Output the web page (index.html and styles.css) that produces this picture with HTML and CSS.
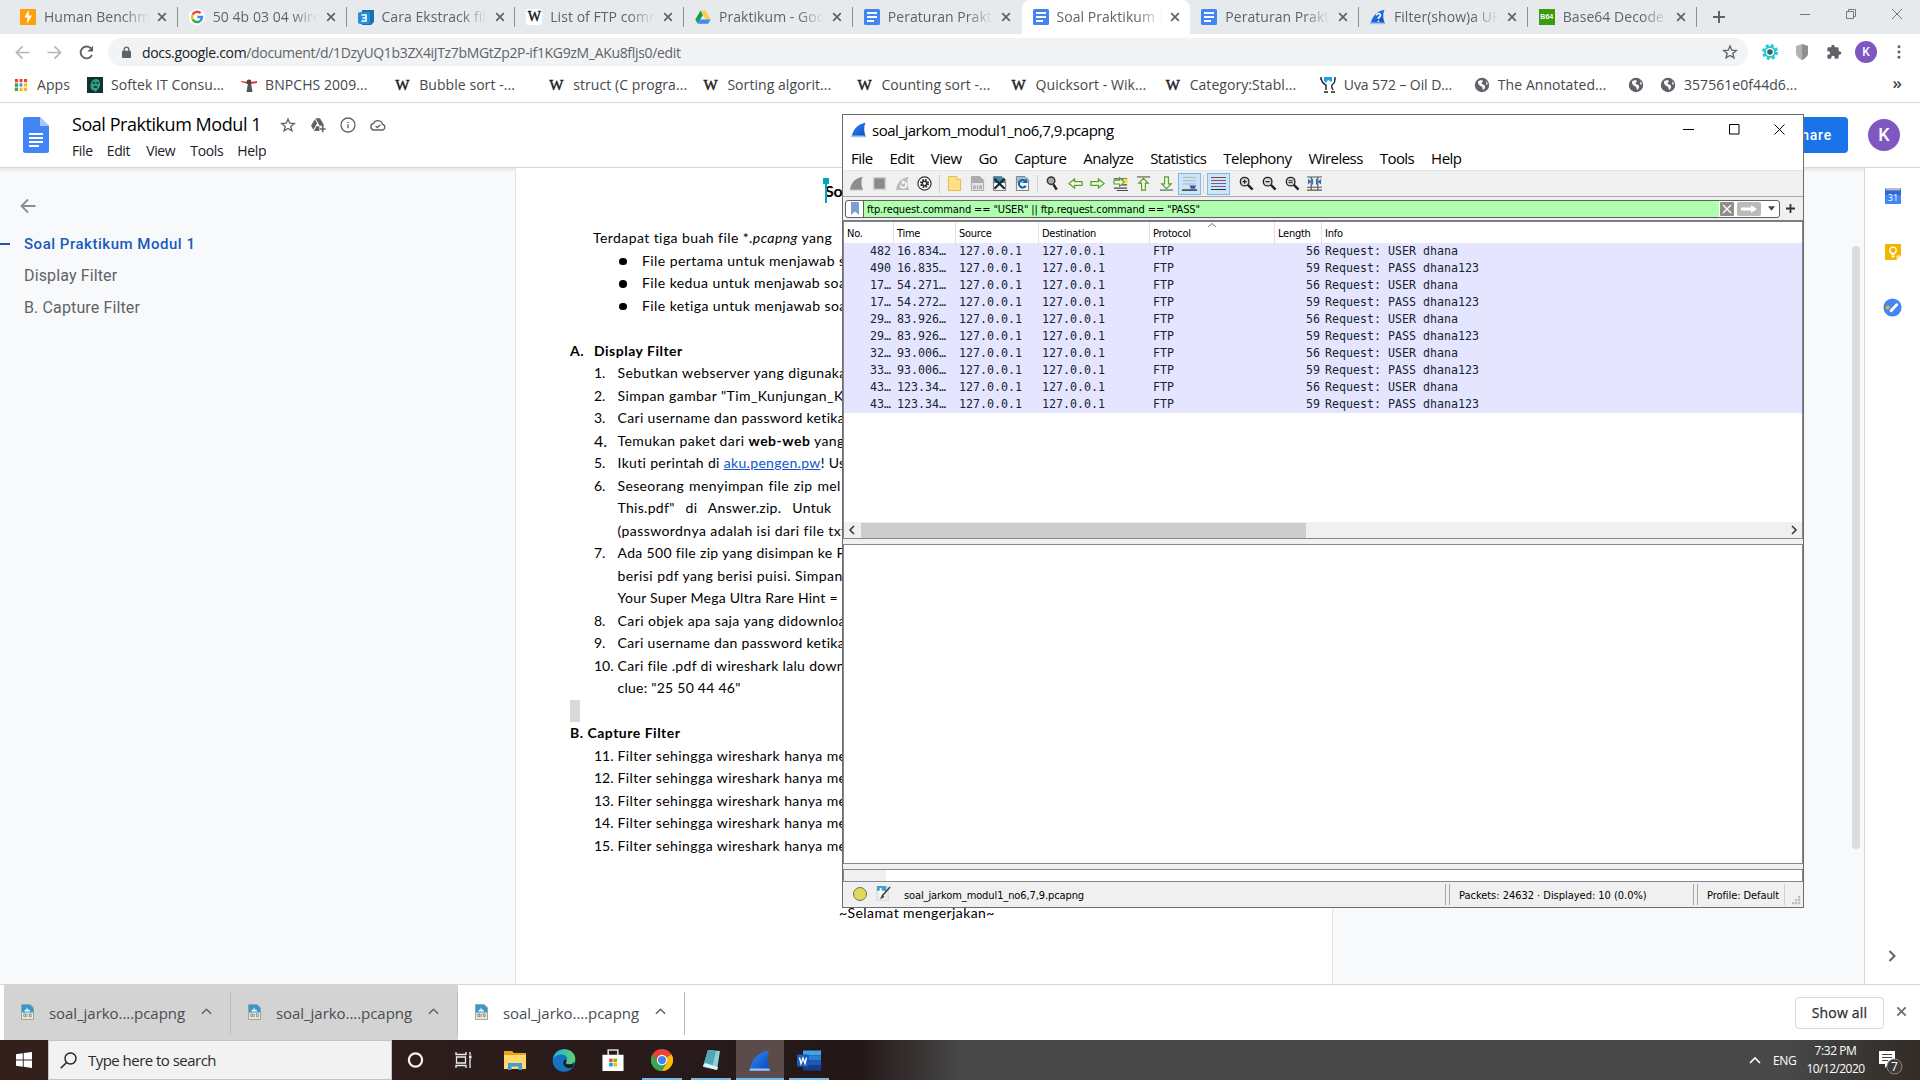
FILE: index.html
```html
<!DOCTYPE html>
<html lang="id">
<head>
<meta charset="utf-8">
<title>Soal Praktikum Modul 1 - Google Docs</title>
<link rel="stylesheet" href="styles.css">
</head>
<body>
<svg class="defs" aria-hidden="true">
  <defs>
    <linearGradient id="finBlue" x1="0" y1="0" x2="1" y2="1"><stop offset="0" stop-color="#2f8bff"/><stop offset="1" stop-color="#0a48b8"/></linearGradient>
    <symbol id="fin" viewBox="0 0 16 16"><path d="M.5 15C2 8 6 2 14.500.8 12.600 5 12.800 10 15 15z" fill="url(#finBlue)"/><path d="M.5 15.200l.7-1.700h13.200l.6 1.700z" fill="#9cc4f5"/></symbol>
    <symbol id="gdoc" viewBox="0 0 16 16"><rect width="16" height="16" rx="1.5" fill="#4285f4"/><path d="M3 4h10M3 8h10M3 12h7" stroke="#fff" stroke-width="1.8"/></symbol>
    <symbol id="x" viewBox="0 0 10 10"><path d="M1.2 1.2l7.6 7.6M8.8 1.2L1.2 8.8" stroke="currentColor" stroke-width="1.7" fill="none"/></symbol>
    <symbol id="globe" viewBox="0 0 16 16"><circle cx="8" cy="8" r="7.200" fill="#5f6368"/><path d="M4 4.500C6 2.500 9 3 9 4S7 5.500 7.500 6.500 10 7 11 9c.6 1.500-.6 3-2 4-.5-1 0-2-1-3S3.500 8 4 4.500zM12 4l2 3-1.500 1z" fill="#fff"/></symbol>
    <symbol id="star" viewBox="0 0 24 24"><path d="M12 3l2.600 6.300 6.900.5-5.300 4.400 1.700 6.700L12 17.300l-5.900 3.600 1.700-6.700L2.500 9.800l6.900-.5z" fill="none" stroke="#5f6368" stroke-width="2"/></symbol>
    <symbol id="back" viewBox="0 0 16 16"><path d="M15.500 8H2M8 1.500L1.500 8 8 14.500" fill="none" stroke="currentColor" stroke-width="1.800"/></symbol>
    <symbol id="up" viewBox="0 0 12 8"><path d="M1 7l5-5 5 5" fill="none" stroke="currentColor" stroke-width="1.600"/></symbol>
    <symbol id="capfile" viewBox="0 0 14 17"><path d="M.5.500h9.500l3.500 3.500v12.500H.5z" fill="#eceada" stroke="#9a9a8c"/><path d="M1 1h9l3 3v5H1z" fill="#2f9ad0"/><path d="M4 8V6h2V4h1v2h2l1 2z" fill="#fff"/><path d="M3 10.500h2v3H3zM6.500 10.500v3.500M9 10.500h2v3H9z" fill="none" stroke="#888"/></symbol>
    <symbol id="lens" viewBox="0 0 16 16"><circle cx="6" cy="6" r="4.600" fill="#d8d8d8" stroke="#222" stroke-width="1.400"/><path d="M9.500 9.500l5 5" stroke="#222" stroke-width="2.600"/></symbol>
    <symbol id="garrow" viewBox="0 0 16 12"><path d="M1 6l6-4.800v2.800h8v4H7v2.800z" fill="#f4ffe8" stroke="#5a9e2a" stroke-width="1.300"/></symbol>
  </defs>
</svg>

<div class="browser">
  <div class="tabstrip">
    <div class="tab"><svg class="fav" viewBox="0 0 16 16"><rect width="16" height="16" rx="1" fill="#ff9f0a"/><path d="M8.500 1L4.500 8.500h3L7 15l5-8.500H8.800z" fill="#fff"/></svg><span class="tab-t">Human Benchm</span><svg class="cl"><use href="#x"/></svg></div>
    <div class="tab"><svg class="fav" viewBox="0 0 16 16"><circle cx="8" cy="8" r="8" fill="#fff"/><g fill="none" stroke-width="2.400"><path d="M11.600 4.200A5 5 0 0 0 3.600 5.800" stroke="#ea4335"/><path d="M3.600 5.800a5 5 0 0 0 0 4.600" stroke="#fbbc05"/><path d="M3.600 10.400a5 5 0 0 0 7.700 1.400" stroke="#34a853"/><path d="M11.300 11.800A5 5 0 0 0 13 8H8.300" stroke="#4285f4"/></g></svg><span class="tab-t">50 4b 03 04 wire</span><svg class="cl"><use href="#x"/></svg></div>
    <div class="tab"><svg class="fav" viewBox="0 0 16 16"><path d="M4 1h12v12l-3 3H4z" fill="#1a6fb0"/><rect y="3" width="12" height="12" rx="2" fill="#2b8fd8"/><path d="M3.500 6H8v6H3.500M4.500 9H8" fill="none" stroke="#fff" stroke-width="1.500"/></svg><span class="tab-t">Cara Ekstrack file</span><svg class="cl"><use href="#x"/></svg></div>
    <div class="tab"><span class="fav wiki">W</span><span class="tab-t">List of FTP comr</span><svg class="cl"><use href="#x"/></svg></div>
    <div class="tab"><svg class="fav" viewBox="0 0 16 16"><path d="M5.500 1.500L.3 10.500l2.600 4.200L8 5.800z" fill="#0f9d58"/><path d="M5.500 1.500h5l5.200 9h-5.200z" fill="#ffcd40"/><path d="M5.400 10.500h10.300l-2.600 4.200H2.900z" fill="#4285f4"/></svg><span class="tab-t">Praktikum - Goo</span><svg class="cl"><use href="#x"/></svg></div>
    <div class="tab nosep"><svg class="fav"><use href="#gdoc"/></svg><span class="tab-t">Peraturan Prakti</span><svg class="cl"><use href="#x"/></svg></div>
    <div class="tab active"><svg class="fav"><use href="#gdoc"/></svg><span class="tab-t">Soal Praktikum M</span><svg class="cl"><use href="#x"/></svg></div>
    <div class="tab"><svg class="fav"><use href="#gdoc"/></svg><span class="tab-t">Peraturan Prakti</span><svg class="cl"><use href="#x"/></svg></div>
    <div class="tab"><svg class="fav"><use href="#fin"/><path d="M6.500 6.500q0-2 2-2t2 1.700-2 2.300v1.500M8.500 11.500v1.600" fill="none" stroke="#fff" stroke-width="1.600"/></svg><span class="tab-t">Filter(show)a UF</span><svg class="cl"><use href="#x"/></svg></div>
    <div class="tab"><span class="fav b64">B64</span><span class="tab-t">Base64 Decode</span><svg class="cl"><use href="#x"/></svg></div>
    <svg class="newtab" viewBox="0 0 12 12"><path d="M6 0v12M0 6h12" stroke="#5f6368" stroke-width="2"/></svg>
    <div class="wc">
      <svg viewBox="0 0 12 12"><path d="M1 6.500h10" stroke="#777"/></svg>
      <svg viewBox="0 0 12 12"><path d="M1.500 3.500h7v7h-7zM3.500 3.500v-2h7v7h-2" stroke="#777" fill="none"/></svg>
      <svg viewBox="0 0 12 12"><path d="M1 1l10 10M11 1L1 11" stroke="#777"/></svg>
    </div>
  </div>

  <div class="toolbar">
    <svg class="nav dim"><use href="#back"/></svg>
    <svg class="nav dim flip"><use href="#back"/></svg>
    <svg class="nav" viewBox="0 0 16 16"><path d="M13.800 10.500A6.300 6.300 0 1 1 12.500 3.500" fill="none" stroke="#5f6368" stroke-width="2"/><path d="M15 .8v6H9z" fill="#5f6368"/></svg>
    <div class="omni">
      <svg class="lock" viewBox="0 0 10 14"><rect y="5" width="10" height="8" rx="1" fill="#5f6368"/><path d="M2.500 6V3.500a2.500 2.500 0 0 1 5 0V6" fill="none" stroke="#5f6368" stroke-width="1.500"/></svg>
      <span class="url"><b>docs.google.com</b>/document/d/1DzyUQ1b3ZX4iJTz7bMGtZp2P-if1KG9zM_AKu8fljs0/edit</span>
      <svg class="omni-star"><use href="#star"/></svg>
    </div>
    <div class="exts">
      <svg viewBox="0 0 16 16"><circle cx="8" cy="8" r="6.500" fill="none" stroke="#2cc6d0" stroke-width="3" stroke-dasharray="3 2.100"/><circle cx="8" cy="8" r="5" fill="none" stroke="#2cc6d0" stroke-width="2"/><circle cx="8" cy="8" r="2.800" fill="#36616e"/></svg>
      <svg viewBox="0 0 16 16"><path d="M8 0l6 2v7c0 3-3 5.500-6 7-3-1.500-6-4-6-7V2z" fill="#b3b3b3"/><path d="M8 0l6 2v7c0 3-3 5.500-6 7z" fill="#8f8f8f"/></svg>
      <svg viewBox="0 0 24 24"><path d="M20.500 11H19V7a2 2 0 0 0-2-2h-4V3.500a2.500 2.500 0 0 0-5 0V5H4a2 2 0 0 0-2 2v3.800h1.500a2.700 2.700 0 0 1 0 5.400H2V20a2 2 0 0 0 2 2h3.800v-1.500a2.700 2.700 0 0 1 5.400 0V22H17a2 2 0 0 0 2-2v-4h1.500a2.500 2.500 0 0 0 0-5z" fill="#5f6368"/></svg>
    </div>
    <span class="me small">K</span>
    <svg class="dots" viewBox="0 0 4 16"><g fill="#5f6368"><circle cx="2" cy="2" r="1.700"/><circle cx="2" cy="8" r="1.700"/><circle cx="2" cy="14" r="1.700"/></g></svg>
  </div>

  <div class="bookmarks">
    <span class="bm apps"><svg viewBox="0 0 16 16"><path d="M1 3h4M1 8h4M1 13h4" stroke="#ea4335" stroke-width="3.600"/><path d="M6 3h4M11 3h4" stroke="#ea4335" stroke-width="3.600"/><path d="M1 8h4" stroke="#34a853" stroke-width="3.600"/><path d="M1 13h4" stroke="#34a853" stroke-width="3.600"/><path d="M6 8h4" stroke="#4285f4" stroke-width="3.600"/><path d="M11 8h4M6 13h4M11 13h4" stroke="#fbbc05" stroke-width="3.600"/><path d="M5.500 0v16M10.500 0v16" stroke="#fff" stroke-width="1.400"/></svg>Apps</span>
    <span class="bm"><svg viewBox="0 0 16 16"><rect width="16" height="16" fill="#12312f"/><path d="M4 12C2 4 8 0 12 3c2 3 1 8-1 9l-2 3z" fill="#2f9c85"/><path d="M6 6h2M9.500 6h2M7 10h3" stroke="#0b1f1e" stroke-width="1.500"/></svg>Softek IT Consu...</span>
    <span class="bm"><svg viewBox="0 0 16 16"><path d="M5.500 15l1.500-9h3l1.500 9z" fill="#555"/><path d="M0 4l7 1v2L0 5zM16 4L9 5v2l7-1z" fill="#d33"/><circle cx="8" cy="5" r="2.400" fill="#444"/></svg>BNPCHS 2009...</span>
    <span class="bm"><i class="w">W</i>Bubble sort -...</span>
    <span class="bm"><i class="w">W</i>struct (C progra...</span>
    <span class="bm"><i class="w">W</i>Sorting algorit...</span>
    <span class="bm"><i class="w">W</i>Counting sort -...</span>
    <span class="bm"><i class="w">W</i>Quicksort - Wik...</span>
    <span class="bm"><i class="w">W</i>Category:Stabl...</span>
    <span class="bm uva"><svg viewBox="0 0 16 16"><path d="M4 0h8v5l-4-2-2 3-2-2z" fill="#17a4e8"/><path d="M1 1c1 5 2 5 5 7v5M15 1c-1 5 1 4-3 7-1 2 0 3 1 5M4 15h4M11 15h4M1 0v3M15 0v3" fill="none" stroke="#222" stroke-width="1.400"/></svg>Uva 572 – Oil D...</span>
    <span class="bm"><svg><use href="#globe"/></svg>The Annotated...</span>
    <span class="bm bare"><svg><use href="#globe"/></svg></span>
    <span class="bm"><svg><use href="#globe"/></svg>357561e0f44d6...</span>
    <span class="more">»</span>
  </div>

  <header class="docs-head">
    <svg class="doc-logo" viewBox="0 0 26 36"><path d="M2.500 0H17l9 9v24.500a2.500 2.500 0 0 1-2.500 2.500h-21A2.500 2.500 0 0 1 0 33.500v-31A2.500 2.500 0 0 1 2.500 0z" fill="#4285f4"/><path d="M17 0l9 9h-9z" fill="#a9c7fb"/><path d="M6 17h14M6 21h14M6 25h14M6 29h10" stroke="#fff" stroke-width="2"/></svg>
    <div class="doc-meta">
      <div class="doc-title"><span>Soal Praktikum Modul 1</span>
        <svg><use href="#star"/></svg>
        <svg viewBox="0 0 24 24"><path d="M8 2h7l6.500 11h-7z" fill="#5f6368"/><path d="M7.200 3.300l3.400 6L5 19l-3.500-6z" fill="#5f6368"/><path d="M9.500 14H14v7H6z" fill="#5f6368"/><path d="M19 13v10M14.500 18h9" stroke="#5f6368" stroke-width="2.400"/></svg>
        <svg viewBox="0 0 24 24"><circle cx="12" cy="12" r="10.500" fill="none" stroke="#5f6368" stroke-width="2"/><path d="M12 11v6M12 7v2" stroke="#5f6368" stroke-width="2"/></svg>
        <svg viewBox="0 0 24 24"><path d="M6 19.500a5 5 0 0 1-.6-9.900A7 7 0 0 1 18.700 11 4.300 4.300 0 0 1 18.500 19.500z" fill="none" stroke="#5f6368" stroke-width="2"/><path d="M8.500 13.500l2.500 2.500 4.500-4.500" fill="none" stroke="#5f6368" stroke-width="2"/></svg>
      </div>
      <nav class="doc-menu"><span>File</span><span>Edit</span><span>View</span><span>Tools</span><span>Help</span></nav>
    </div>
    <span class="share">Share</span>
    <span class="me">K</span>
  </header>

  <main class="docs-body">
    <aside class="outline">
      <svg><use href="#back"/></svg>
      <p class="cur">Soal Praktikum Modul 1</p>
      <p>Display Filter</p>
      <p>B. Capture Filter</p>
    </aside>
    <article class="page">
      <h1><span class="caret"></span>Soal Shift</h1>
      <p class="in1">Terdapat tiga buah file *.<em>pcapng</em> yang</p>
      <p class="bul"><i></i>File pertama untuk menjawab soal</p>
      <p class="bul"><i></i>File kedua untuk menjawab soal</p>
      <p class="bul"><i></i>File ketiga untuk menjawab soal</p>
      <p>&nbsp;</p>
      <p class="sec"><span>A.</span>Display Filter</p>
      <p class="num"><span>1.</span>Sebutkan webserver yang digunakan</p>
      <p class="num"><span>2.</span>Simpan gambar "Tim_Kunjungan_Kerja</p>
      <p class="num snug"><span>3.</span>Cari username dan password ketika</p>
      <p class="num"><span class="four">4.</span>Temukan paket dari&nbsp;<b>web-web</b>&nbsp;yang</p>
      <p class="num snug"><span>5.</span>Ikuti perintah di&nbsp;<a>aku.pengen.pw</a>! Username</p>
      <p class="num j1"><span>6.</span>Seseorang menyimpan file zip mel</p>
      <p class="cont j2">This.pdf" di Answer.zip. Untuk m</p>
      <p class="cont">(passwordnya adalah isi dari file txt</p>
      <p class="num snug"><span>7.</span>Ada 500 file zip yang disimpan ke FTP</p>
      <p class="cont">berisi pdf yang berisi puisi. Simpan</p>
      <p class="cont tight">Your Super Mega Ultra Rare Hint =</p>
      <p class="num"><span>8.</span>Cari objek apa saja yang didownload</p>
      <p class="num snug"><span>9.</span>Cari username dan password ketika</p>
      <p class="num snug"><span>10.</span>Cari file .pdf di wireshark lalu download</p>
      <p class="cont tight">clue: "25 50 44 46"</p>
      <p class="sel"><i></i></p>
      <p class="secb">B. Capture Filter</p>
      <p class="num"><span>11.</span>Filter sehingga wireshark hanya me</p>
      <p class="num"><span>12.</span>Filter sehingga wireshark hanya me</p>
      <p class="num"><span>13.</span>Filter sehingga wireshark hanya me</p>
      <p class="num"><span>14.</span>Filter sehingga wireshark hanya me</p>
      <p class="num"><span>15.</span>Filter sehingga wireshark hanya me</p>
      <p>&nbsp;</p><p>&nbsp;</p>
      <p class="bye">~Selamat mengerjakan~</p>
    </article>
    <div class="scroll"><i></i></div>
    <aside class="side">
      <svg viewBox="0 0 16 16"><rect width="16" height="16" rx="1" fill="#4285f4"/><path d="M1 0h14v2.500H1z" fill="#bdbdbd"/><path d="M0 2.500h16V7H0z" fill="#3367d6"/><text x="8" y="13" class="cal">31</text></svg>
      <svg viewBox="0 0 16 16"><path d="M1 0h14a1 1 0 0 1 1 1v10.500L11.500 16H1a1 1 0 0 1-1-1V1a1 1 0 0 1 1-1z" fill="#f4b400"/><path d="M16 11.500L11.500 16v-4.500z" fill="#fde6a3"/><circle cx="8" cy="6.300" r="3.200" fill="none" stroke="#fff" stroke-width="1.300"/><path d="M6.500 10.500h3M6.500 12.500h3" stroke="#fff" stroke-width="1.300"/></svg>
      <svg class="big" viewBox="0 0 20 20"><circle cx="10" cy="10" r="9.500" fill="#4285f4"/><path d="M8.500 13.500l6-6.500" stroke="#fff" stroke-width="3" stroke-linecap="round"/><circle cx="5" cy="10" r="2" fill="#f4b400"/></svg>
      <svg class="chev" viewBox="0 0 8 12"><path d="M1.500 1l5 5-5 5" fill="none" stroke="#5f6368" stroke-width="2"/></svg>
    </aside>
  </main>

  <footer class="downloads">
    <div class="dl grey"><svg class="f"><use href="#capfile"/></svg><span>soal_jarko....pcapng</span><svg class="u"><use href="#up"/></svg></div>
    <div class="dl grey"><svg class="f"><use href="#capfile"/></svg><span>soal_jarko....pcapng</span><svg class="u"><use href="#up"/></svg></div>
    <div class="dl"><svg class="f"><use href="#capfile"/></svg><span>soal_jarko....pcapng</span><svg class="u"><use href="#up"/></svg></div>
    <span class="showall">Show all</span>
    <svg class="dlx"><use href="#x"/></svg>
  </footer>
</div>

<section class="shark">
  <div class="ws-title">
    <svg class="ws-ico"><use href="#fin"/></svg><span>soal_jarkom_modul1_no6,7,9.pcapng</span>
    <div class="ws-wc">
      <svg viewBox="0 0 11 11"><path d="M0 5.500h11" stroke="#000"/></svg>
      <svg viewBox="0 0 11 11"><path d="M.5.500h9.500v9.500H.5z" fill="none" stroke="#000"/></svg>
      <svg viewBox="0 0 11 11"><path d="M.5.500l10 10M10.500.500l-10 10" stroke="#000"/></svg>
    </div>
  </div>
  <nav class="ws-menu"><span>File</span><span>Edit</span><span>View</span><span>Go</span><span>Capture</span><span>Analyze</span><span>Statistics</span><span>Telephony</span><span>Wireless</span><span>Tools</span><span>Help</span></nav>
  <div class="ws-tools">
    <span><svg viewBox="0 0 16 16"><path d="M1 15C2 8 6 2 14.500.8 12.600 5 12.800 10 15 15z" fill="#8e8e8e"/><path d="M1 15h14" stroke="#ccc"/></svg></span>
    <span><svg viewBox="0 0 16 16"><rect x="1" y="1" width="14" height="14" fill="#d0d0d0"/><rect x="2.500" y="2.500" width="11" height="11" fill="#8a8a8a"/></svg></span>
    <span><svg viewBox="0 0 16 16"><path d="M1 15C2 8 6 2 14.500.8 12.600 5 12.800 10 15 15z" fill="#bdbdbd"/><path d="M6 9.500a3 3 0 1 0 3-3M7.500 5l2 1.500-2 2" stroke="#fff" stroke-width="1.500" fill="none"/></svg></span>
    <span><svg viewBox="0 0 16 16"><circle cx="8" cy="8" r="7" fill="#fff" stroke="#333" stroke-width="1.300"/><circle cx="8" cy="8" r="3.800" fill="none" stroke="#333" stroke-width="2" stroke-dasharray="1.800 1.200"/><circle cx="8" cy="8" r="3.200" fill="#333"/><circle cx="8" cy="8" r="1.500" fill="#fff"/></svg></span>
    <b></b>
    <span><svg viewBox="0 0 14 16"><path d="M.5.500h9v3h4v12H.5z" fill="#ffe084" stroke="#e0b74c"/></svg></span>
    <span><svg viewBox="0 0 14 16"><path d="M.5.500h9l4 4v11H.5z" fill="#e4e4e4" stroke="#a5a5a5"/><path d="M1 1h8.500L13 4.500v3H1z" fill="#adadad"/><path d="M3 10.500h1.500v3H3zM7 10v4M9.500 10.500H11v3H9.500z" stroke="#999" fill="none"/></svg></span>
    <span><svg viewBox="0 0 14 16"><path d="M.5.500h9l4 4v11H.5z" fill="#eef3f5" stroke="#777"/><path d="M1 1h8.500L13 4.500v3H1z" fill="#3789b5"/><path d="M1.500 3l11 10.500M12.500 3l-11 10.500" stroke="#1b2226" stroke-width="2.200"/></svg></span>
    <span><svg viewBox="0 0 14 16"><path d="M.5.500h9l4 4v11H.5z" fill="#eef3f5" stroke="#777"/><path d="M1 1h8.500L13 4.500v3H1z" fill="#8fc1dc"/><path d="M10.500 10.500A4 4 0 1 1 9.500 5" fill="none" stroke="#1b5fa0" stroke-width="2.200"/><path d="M12 2.500v5H7z" fill="#1b5fa0"/></svg></span>
    <b></b>
    <span><svg viewBox="0 0 14 16"><circle cx="5.500" cy="5" r="4" fill="#aaa" stroke="#333" stroke-width="1.500"/><path d="M8 9l3.500 5.500" stroke="#222" stroke-width="2.600"/></svg></span>
    <span><svg><use href="#garrow"/></svg></span>
    <span><svg class="flip"><use href="#garrow"/></svg></span>
    <span><svg viewBox="0 0 16 16"><path d="M1 3h14M1 13h14M4 15.500h12M9 9.500h6" stroke="#444" stroke-width="1.300"/><rect x="11" y="3" width="5" height="5" fill="#ffe14d"/><path d="M1 4.500h6V2l5 4.500-5 4.500V8.500H1z" fill="#e9fbd8" stroke="#5a9e2a" stroke-width="1.200"/></svg></span>
    <span><svg viewBox="0 0 16 16"><path d="M1 1h14" stroke="#666" stroke-width="1.300"/><path d="M8 2.500l5 5H10v7.500H6V7.500H3z" fill="#f4ffe8" stroke="#5a9e2a" stroke-width="1.300"/></svg></span>
    <span><svg viewBox="0 0 16 16"><path d="M1 15h14" stroke="#666" stroke-width="1.300"/><path d="M8 13.500l5-5H10V1H6v7.500H3z" fill="#f4ffe8" stroke="#5a9e2a" stroke-width="1.300"/></svg></span>
    <span class="on"><svg viewBox="0 0 16 16"><path d="M1 1.500h14M1 5h14M1 8.500h14" stroke="#aab4b4" /><path d="M0 15h16" stroke="#222" stroke-width="1.400"/><path d="M8 10h7l-1.500 3.500h-4z" fill="#2c5fa8"/></svg></span>
    <b></b>
    <span class="on"><svg viewBox="0 0 15 15"><path d="M0 1.500h15" stroke="#555"/><path d="M0 4.500h15" stroke="#e03030"/><path d="M0 7.500h15" stroke="#3a6fd8"/><path d="M0 10.500h15" stroke="#7a5a8a"/><path d="M0 13.500h15" stroke="#333"/></svg></span>
    <b class="none"></b>
    <span><svg viewBox="0 0 16 16"><use href="#lens"/><path d="M3.800 6h4.400M6 3.800v4.400" stroke="#222" stroke-width="1.200"/></svg></span>
    <span><svg viewBox="0 0 16 16"><use href="#lens"/><path d="M3.800 6h4.400" stroke="#222" stroke-width="1.300"/></svg></span>
    <span><svg viewBox="0 0 16 16"><use href="#lens"/><path d="M3.800 5h4.400M3.800 7h4.400" stroke="#222"/></svg></span>
    <span><svg viewBox="0 0 16 16"><path d="M0 1h16M0 15h16M0 12h16M4.500 1v14M11.500 1v14" stroke="#555" stroke-width="1.200"/><path d="M1 3l3.500 3L1 9zM15 3l-3.500 3L15 9z" fill="#2c6fb8"/><path d="M5 3h1.500v6H5zM9.500 3H11v6H9.500z" fill="#2c6fb8"/></svg></span>
  </div>
  <div class="ws-filter">
    <div class="box">
      <div class="mark"><svg viewBox="0 0 8 13"><path d="M0 0h8v13L4 9.500 0 13z" fill="#7a9fd0"/></svg></div>
      <span class="expr">ftp.request.command == "USER" || ftp.request.command == "PASS"</span>
      <svg class="clr" viewBox="0 0 14 14"><rect width="14" height="14" rx="1" fill="#8f8f8a"/><path d="M3 3l8 8M11 3l-8 8" stroke="#fff" stroke-width="1.400"/></svg>
      <svg class="go" viewBox="0 0 24 14"><rect width="24" height="14" rx="2" fill="#bababa"/><path d="M4 5.500h10V3l6 4-6 4V8.500H4z" fill="#fff"/></svg>
      <svg class="tri" viewBox="0 0 6 4"><path d="M0 0h6L3 4z" fill="#444"/></svg>
    </div>
    <svg class="plus" viewBox="0 0 8 8"><path d="M4 0v8M0 4h8" stroke="#333" stroke-width="1.600"/></svg>
  </div>
  <div class="ws-list">
    <div class="row head"><span>No.</span><span>Time</span><span>Source</span><span>Destination</span><span>Protocol<svg class="sort" viewBox="0 0 8 4"><path d="M0 4l4-3.500L8 4" fill="none" stroke="#777"/></svg></span><span>Length</span><span>Info</span></div>
    <div class="row"><span>482</span><span>16.834…</span><span>127.0.0.1</span><span>127.0.0.1</span><span>FTP</span><span>56</span><span>Request: USER dhana</span></div>
    <div class="row"><span>490</span><span>16.835…</span><span>127.0.0.1</span><span>127.0.0.1</span><span>FTP</span><span>59</span><span>Request: PASS dhana123</span></div>
    <div class="row"><span>17…</span><span>54.271…</span><span>127.0.0.1</span><span>127.0.0.1</span><span>FTP</span><span>56</span><span>Request: USER dhana</span></div>
    <div class="row"><span>17…</span><span>54.272…</span><span>127.0.0.1</span><span>127.0.0.1</span><span>FTP</span><span>59</span><span>Request: PASS dhana123</span></div>
    <div class="row"><span>29…</span><span>83.926…</span><span>127.0.0.1</span><span>127.0.0.1</span><span>FTP</span><span>56</span><span>Request: USER dhana</span></div>
    <div class="row"><span>29…</span><span>83.926…</span><span>127.0.0.1</span><span>127.0.0.1</span><span>FTP</span><span>59</span><span>Request: PASS dhana123</span></div>
    <div class="row"><span>32…</span><span>93.006…</span><span>127.0.0.1</span><span>127.0.0.1</span><span>FTP</span><span>56</span><span>Request: USER dhana</span></div>
    <div class="row"><span>33…</span><span>93.006…</span><span>127.0.0.1</span><span>127.0.0.1</span><span>FTP</span><span>59</span><span>Request: PASS dhana123</span></div>
    <div class="row"><span>43…</span><span>123.34…</span><span>127.0.0.1</span><span>127.0.0.1</span><span>FTP</span><span>56</span><span>Request: USER dhana</span></div>
    <div class="row"><span>43…</span><span>123.34…</span><span>127.0.0.1</span><span>127.0.0.1</span><span>FTP</span><span>59</span><span>Request: PASS dhana123</span></div>
    <div class="hbar">
      <svg viewBox="0 0 8 10"><path d="M6 1L2 5l4 4" fill="none" stroke="#333" stroke-width="1.500"/></svg><i></i>
      <svg class="r" viewBox="0 0 8 10"><path d="M2 1l4 4-4 4" fill="none" stroke="#333" stroke-width="1.500"/></svg>
    </div>
  </div>
  <div class="ws-detail"></div>
  <div class="ws-bytes"><i></i></div>
  <div class="ws-status">
    <i class="lamp"></i>
    <svg class="note" viewBox="0 0 16 16"><path d="M1 0h10l2 2v14H1z" fill="#eee" stroke="#bbb" stroke-width=".6"/><path d="M1 0h10v6H1z" fill="#39a3d0"/><path d="M5 2v8M1.500 6h8" stroke="#fff" stroke-width="2"/><path d="M15 1L7 10l-1 2.500L8.500 11" fill="none" stroke="#444" stroke-width="1.700"/></svg>
    <span class="fname">soal_jarkom_modul1_no6,7,9.pcapng</span>
    <i class="dbl"></i><span class="pk">Packets: 24632 · Displayed: 10 (0.0%)</span>
    <i class="dbl"></i><span class="pf">Profile: Default</span><i class="sgl"></i>
    <svg class="grip" viewBox="0 0 9 9"><path d="M6 0h2.200v2.200H6zM3 3h2.200v2.200H3zM6 3h2.200v2.200H6zM0 6h2.200v2.200H0zM3 6h2.200v2.200H3zM6 6h2.200v2.200H6z" fill="#bbb"/></svg>
  </div>
</section>

<div class="taskbar">
  <div class="start"><svg viewBox="0 0 16 16"><path d="M0 2.200L6.800 1.200v6.300H0zM7.700 1.100L16 0v7.500H7.700zM0 8.400h6.800v6.300L0 13.800zM7.700 8.400H16V16l-8.300-1.200z" fill="#fff"/></svg></div>
  <div class="search"><svg viewBox="0 0 17 17"><circle cx="10.500" cy="6.500" r="5.500" fill="none" stroke="#222" stroke-width="1.400"/><path d="M6.500 10.500L.8 16.200" stroke="#222" stroke-width="1.500"/></svg><span>Type here to search</span></div>
  <div class="ti cortana"><svg viewBox="0 0 16 16"><circle cx="8" cy="8" r="6.600" fill="none" stroke="#f4f4f4" stroke-width="2.200"/></svg></div>
  <div class="ti view"><svg viewBox="0 0 17 16"><path d="M1 0v2.500h10V0M1 16v-2.500h10V16M1.500 5h9v6h-9zM15 0v3M15 7v9" fill="none" stroke="#eee" stroke-width="1.300"/><rect x="14" y="3.500" width="2.500" height="3" fill="#eee"/></svg></div>
  <div class="ti wide"><svg class="l" viewBox="0 0 22 22"><path d="M0 2h8l2 2h12v16H0z" fill="#e8a317"/><path d="M0 6h22v14H0z" fill="#ffd969"/><path d="M4 21v-7h14v7h-3.500v-3.500h-7V21z" fill="#3d9be0"/></svg></div>
  <div class="ti edge"><svg class="xl" viewBox="0 0 24 24"><defs><linearGradient id="eg" x1="0" y1="0" x2="1" y2="0"><stop offset="0" stop-color="#2aa7e0"/><stop offset="1" stop-color="#5bd66a"/></linearGradient></defs><circle cx="12" cy="12" r="11.800" fill="#1673c4"/><path d="M.4 10.500C1.500 4 6.500.2 12.300.2c7 0 11.500 5 11.500 9.800 0 4-3 6-6 6-4.200 0-4.600-1.700-3.300-3C17 9 13 5.500 9 5.800 5 6 2 8 .4 10.500z" fill="url(#eg)"/><path d="M14.500 13c-1.300 1.300-.9 3 3.300 3 2 0 4-1 5-2.500l-1.300 5c-1.500 1.500-4 2-6.500 1-4-1.700-4.500-6-2.500-8.500 1.500 0 2.500 1 2 2z" fill="#231a1a"/></svg></div>
  <div class="ti wide"><svg class="xl" viewBox="0 0 24 24"><path d="M7 7V1h10v6" fill="none" stroke="#ddd" stroke-width="1.700"/><path d="M1 6h22v17H1z" fill="#fff"/><path d="M8 10h3.700v3.700H8z" fill="#e8502a"/><path d="M12.500 10h3.700v3.700h-3.700z" fill="#7fba00"/><path d="M8 14.500h3.700v3.700H8z" fill="#00a4ef"/><path d="M12.500 14.500h3.700v3.700h-3.700z" fill="#ffb900"/></svg></div>
  <div class="ti run first"><svg class="l" viewBox="0 0 24 24"><circle cx="12" cy="12" r="12" fill="#ea4335"/><path d="M1.600 6A12 12 0 0 0 12 24l5-9-9 0z" fill="#34a853"/><path d="M22.400 6A12 12 0 0 1 12 24l5.200-9L14 6.500z" fill="#fbbc05"/><path d="M1.600 6h20.800L12 12z" fill="#ea4335"/><circle cx="12" cy="12" r="5.600" fill="#fff"/><circle cx="12" cy="12" r="4.500" fill="#4285f4"/></svg></div>
  <div class="ti run pad"><svg class="l" viewBox="0 0 22 22"><path d="M8 1l12 1-3 19-14-3z" fill="#8fd0d8"/><path d="M8 1l8 1-4 17-9-2z" fill="#4ea8b5"/><path d="M3 17l14 4 1-3-13-4z" fill="#e8f4f4"/></svg></div>
  <div class="ti run on"><svg class="xl"><use href="#fin"/></svg></div>
  <div class="ti run"><svg class="xl" viewBox="0 0 24 22"><path d="M6 1h18v5H6z" fill="#41a5ee"/><path d="M6 6h18v5H6z" fill="#2b7cd3"/><path d="M6 11h18v5H6z" fill="#185abd"/><path d="M6 16h18v5H6z" fill="#103f91"/><rect y="5" width="12" height="12" rx="1" fill="#185abd"/><path d="M2.500 8l1.500 6 2-5.500L8 14l1.500-6" fill="none" stroke="#fff" stroke-width="1.400"/></svg></div>
  <div class="tray">
    <svg class="tu"><use href="#up"/></svg><span class="eng">ENG</span>
    <div class="clock"><span>7:32 PM</span><span class="d">10/12/2020</span></div>
    <svg class="ntf" viewBox="0 0 25 25"><path d="M1 1h16v13h-6l-4 4v-4H1z" fill="#fff"/><path d="M4 4.500h10M4 7.500h10M4 10.500h6" stroke="#444"/><circle cx="16.500" cy="16.500" r="7.500" fill="#3d3a38" stroke="#888"/><text x="16.500" y="21" class="n7">7</text></svg>
  </div>
</div>
</body>
</html>
```
FILE: styles.css
```css
* { box-sizing: border-box; }
body { margin: 0; width: 1920px; height: 1080px; overflow: hidden; position: relative; display: flex; flex-direction: column; font-family: "Open Sans", "Noto Sans", sans-serif; background: #fff; color: #000; white-space: nowrap; }
p, h1 { margin: 0; }
svg { display: block; flex: none; }
.defs { position: absolute; width: 0; height: 0; }
.flip { transform: scaleX(-1); }
.browser { height: 1040px; display: flex; flex-direction: column; }

/* tabs */
.tabstrip { height: 34px; background: #e7eaed; display: flex; padding-left: 9px; font-size: 14px; color: #5f6368; }
.tab { width: 168.75px; display: flex; align-items: center; padding-left: 11px; position: relative; }
.tab::after { content: ""; position: absolute; right: 0; top: 7px; height: 20px; width: 1px; background: #8b8f94; }
.tab.nosep::after, .tab.active::after { display: none; }
.tab.active { background: #fff; border-radius: 8px 8px 0 0; }
.fav { width: 16px; height: 16px; margin-right: 8px; flex: none; }
.wiki { background: #fff; border-radius: 2px; font: 14px/16px "Liberation Serif", serif; -webkit-text-stroke: .4px #111; color: #111; text-align: center; }
.b64 { background: #3a9b0c; color: #fff; font: bold 7px/16px "Liberation Sans", sans-serif; text-align: center; }
.tab-t { width: 105px; overflow: hidden; line-height: 20px; letter-spacing: .05px; -webkit-mask-image: linear-gradient(90deg, #000 75%, transparent); mask-image: linear-gradient(90deg, #000 75%, transparent); }
.cl { width: 10px; height: 10px; margin-left: 8px; color: #5f6368; }
.newtab { width: 12px; height: 12px; margin: 11px 0 0 16px; align-self: flex-start; }
.wc { display: flex; gap: 34px; margin-left: auto; padding: 8px 17px 0 0; }
.wc svg { width: 12px; height: 12px; }

/* toolbar */
.toolbar { height: 34px; display: flex; align-items: center; padding: 2px 19px 0 15px; }
.nav { width: 15px; height: 15px; margin-right: 17px; color: #5f6368; }
.dim { color: #b4b7ba; }
.omni { width: 1640px; height: 28px; margin-left: -3px; border-radius: 14px; background: #f1f3f4; display: flex; align-items: center; padding: 0 10px 0 14px; }
.lock { width: 9px; height: 13px; margin-right: 11px; }
.url { font-size: 14px; letter-spacing: -.33px; color: #5f6368; }
.url b { font-weight: 400; color: #202124; }
.omni-star { width: 16px; height: 16px; margin-left: auto; }
.exts { display: flex; gap: 16px; margin-left: 14px; }
.exts svg { width: 16px; height: 16px; }
.me { width: 32px; height: 32px; border-radius: 50%; background: #7e57c2; color: #fff; font: 500 18px/32px Roboto, sans-serif; text-align: center; flex: none; }
.me.small { width: 22px; height: 22px; font-size: 12px; line-height: 22px; margin-left: 13px; }
.dots { width: 4px; height: 14px; margin-left: auto; }

/* bookmarks */
.bookmarks { height: 35px; border-bottom: 1px solid #d5d7da; display: flex; align-items: center; padding: 0 18px 1px 14px; font-size: 14px; letter-spacing: .06px; color: #45484c; }
.bm { width: 154.1px; display: flex; align-items: center; line-height: 20px; }
.bm svg, .w { width: 16px; height: 16px; margin-right: 8px; flex: none; }
.w { font: 15px/16px "Liberation Serif", serif; -webkit-text-stroke: .5px #222; color: #222; }
.bm.apps { width: 73px; }
.bm.apps svg { width: 14px; height: 14px; margin-right: 9px; }
.bm.uva { letter-spacing: -.08px; }
.bm.bare { width: 32px; }
.more { margin-left: auto; font-size: 17px; font-weight: 600; line-height: 20px; margin-top: -4px; }

/* document header */
.docs-head { height: 65px; border-bottom: 1px solid #d5d7da; display: flex; padding: 0 20px 0 23px; }
.doc-logo { width: 26px; height: 36px; margin-top: 14px; }
.doc-meta { margin-left: 23px; flex: 1; }
.doc-title { display: flex; align-items: center; height: 26px; margin-top: 9px; font-size: 18px; gap: 14px; }
.doc-title span { letter-spacing: -.45px; width: 194px; line-height: 24px; margin-top: -2px; }
.doc-title svg { width: 16px; height: 16px; }
.doc-menu { display: flex; margin-top: 3px; gap: 14px; font-size: 14px; line-height: 20px; letter-spacing: -.36px; color: #202124; }
.doc-menu span:nth-child(3) { margin: 0 1px 0 2px; }
.share { width: 106px; height: 36px; margin-top: 14px; border-radius: 4px; background: #1a73e8; color: #fff; font: 500 14px/36px Roboto, sans-serif; letter-spacing: .8px; text-align: right; padding-right: 16px; }
.docs-head .me { margin: 16px 0 0 20px; }

/* document area */
.docs-body { flex: 1; min-height: 0; display: flex; background: #f8f9fb; box-shadow: inset 0 5px 4px -4px #d9dbde; }
.outline { width: 515px; padding: 30px 0 0 20px; font: 16px/32px Roboto, sans-serif; letter-spacing: .13px; color: #5f6368; }
.outline svg { width: 16px; height: 16px; color: #8b8e92; }
.outline p { padding-left: 4px; }
.outline .cur { font-weight: 500; font-size: 15px; letter-spacing: .52px; color: #185abc; margin-top: 14px; position: relative; }
.outline .cur::before { content: ""; position: absolute; left: -20px; top: 15px; width: 10px; height: 2px; background: #185abc; }
.page { width: 818px; background: #fff; border: 1px solid #e4e6e9; border-width: 0 1px; overflow: hidden; font: 14px/22.500px Lato, Carlito, sans-serif; letter-spacing: .42px; }
.page p { height: 22.5px; display: flex; }
.page h1 { font-size: 16px; line-height: 24px; padding: 11px 0 0 309px; height: 59px; letter-spacing: -.2px; position: relative; }
.caret { position: absolute; left: 309px; top: 10px; width: 2px; height: 25px; background: #00a5bd; }
.caret::before { content: ""; position: absolute; left: -2px; top: 0; width: 6px; height: 6px; background: #00a5bd; }
.page .in1 { padding-left: 77px; white-space: pre; }
.bul { padding-left: 103px; }
.bul i { width: 7.500px; height: 7.500px; border-radius: 50%; background: #000; margin: 8px 15.500px 0 0; }
.sec, .secb, .page b { font-weight: 700; letter-spacing: .5px; }
.sec, .secb, .sel { padding-left: 54px; }
.sec span { width: 24px; }
.num { padding-left: 78px; }
.num span { width: 23.5px; letter-spacing: 0; flex: none; }
.num .four { font-size: 16px; }
.cont { padding-left: 101.500px; }
.snug { letter-spacing: .33px; }
.j1 { word-spacing: 1px; letter-spacing: .36px; }
.j2 { word-spacing: 7px; letter-spacing: .3px; }
.tight { letter-spacing: .25px; }
.page a { color: #1155cc; text-decoration: underline; }
.sel i { width: 10px; height: 22.5px; background: #d9d9d9; }
.bye { padding-left: 323px; letter-spacing: .42px; }
.scroll { flex: 1; padding-top: 78px; }
.scroll i { display: block; width: 8px; height: 603px; border-radius: 4px; background: #dadce0; margin-left: auto; margin-right: 4px; }
.side { width: 56px; background: #fff; border-left: 1px solid #d8dade; display: flex; flex-direction: column; align-items: center; padding: 20px 0 22px; }
.side svg { width: 16px; height: 16px; margin-bottom: 40px; }
.side .big { width: 19px; height: 19px; margin: -2px 0 0; }
.side .chev { width: 8px; height: 12px; margin: auto 2px 0 0; }
.cal { font: 9px "Open Sans", sans-serif; fill: #fff; text-anchor: middle; }

/* download shelf */
.downloads { height: 56px; border-top: 1px solid #d5d7da; display: flex; align-items: center; padding-left: 4px; font-size: 15px; color: #4a4d51; }
.dl { width: 227px; height: 55px; display: flex; align-items: center; padding-left: 17px; position: relative; }
.dl.grey { background: #d3d3d3; }
.dl::after { content: ""; position: absolute; right: 0; top: 7px; width: 1px; height: 43px; background: #b9bbbd; }
.dl .f { width: 13px; height: 16px; margin: 0 15px 2px 0; }
.dl span { width: 152px; letter-spacing: -.05px; }
.dl .u { width: 11px; height: 8px; margin-bottom: 3px; color: #5f6368; }
.showall { margin-left: auto; width: 89px; height: 32px; border: 1px solid #d5d7da; border-radius: 4px; font-size: 14px; line-height: 29px; letter-spacing: .2px; text-align: center; color: #2c2e31; -webkit-text-stroke: .25px #2c2e31; }
.dlx { width: 11px; height: 11px; margin: 0 13px 2px 12px; color: #6c6f73; }

/* packet analyser window */
.shark { position: absolute; left: 842px; top: 114px; width: 962px; height: 794px; background: #f0f0f0; border: 1px solid #6b6b6b; display: flex; flex-direction: column; font: 11px "DejaVu Sans Condensed", "DejaVu Sans", sans-serif; }
.ws-title { height: 29px; background: #fff; display: flex; align-items: center; padding: 0 18px 0 8px; font: 15px "Open Sans", sans-serif; letter-spacing: -.48px; }
.ws-ico { width: 16px; height: 16px; margin-right: 5px; }
.ws-wc { display: flex; gap: 34.5px; margin-left: auto; }
.ws-wc svg { width: 11px; height: 11px; }
.ws-menu { height: 27px; background: #fff; border-bottom: 1px solid #e4e4e4; display: flex; gap: 16.900px; padding-left: 8px; font: 15px/28px "Open Sans", sans-serif; letter-spacing: -.54px; }
.ws-tools { height: 26px; border-bottom: 1px solid #a9a9a9; display: flex; align-items: center; padding-left: 2px; }
.ws-tools span { width: 22.850px; height: 22px; display: flex; align-items: center; justify-content: center; }
.ws-tools svg { width: 15px; height: 15px; }
.ws-tools b { width: 1px; height: 18px; background: #cfcfcf; margin: 0 3px 0 2.500px; }
.ws-tools b.none { background: none; margin: 0 2px; }
.ws-tools .on { background: #cce4f7; border: 1px solid #7fb9e8; }
.ws-filter { height: 25px; border-bottom: 2px solid #7d7d88; display: flex; align-items: center; padding-left: 2px; }
.box { width: 935px; height: 18px; border: 1px solid #5f5f5f; border-radius: 3px; background: #fff; display: flex; align-items: center; }
.mark { width: 18px; height: 16px; border-right: 1px solid #5f5f5f; display: flex; justify-content: center; align-items: center; }
.mark svg { width: 8px; height: 13px; }
.expr { width: 855px; height: 16px; line-height: 17px; background: #afffaf; padding-left: 3px; letter-spacing: -.14px; }
.clr { width: 14px; height: 14px; margin-left: 1px; }
.go { width: 24px; height: 14px; margin: 0 7px 0 3px; }
.tri { width: 7px; height: 5px; }
.plus { width: 9px; height: 9px; margin-left: 6px; }
.ws-list { height: 317px; background: #fff; border: 1px solid #828790; border-top: 0; display: flex; flex-direction: column; }
.row { display: grid; grid-template-columns: 50px 62px 83px 111px 125px 47px 1fr; height: 17px; background: #e6e5ff; color: #12272e; font: 11.630px/17px "DejaVu Sans Mono", monospace; }
.row span { padding-left: 3px; position: relative; }
.row:not(.head) span:first-child, .row:not(.head) span:nth-child(6) { text-align: right; padding: 0 2px 0 0; }
.row:not(.head) span:first-child { padding-right: 3px; }
.row.head { height: 21px; background: #fff; color: #000; font: 11px/23px "DejaVu Sans Condensed", sans-serif; letter-spacing: -.25px; }
.row.head span { border-right: 1px solid #e2e2e2; }
.row.head span:last-child { border: 0; }
.sort { position: absolute; width: 8px; height: 4px; left: 58px; top: 1px; }
.hbar { margin-top: auto; height: 16px; background: #f0f0f0; display: flex; align-items: center; padding: 0 4px; }
.hbar svg { width: 8px; height: 10px; }
.hbar i { width: 445px; height: 15px; background: #cdcdcd; margin-left: 5px; }
.hbar .r { margin-left: auto; }
.ws-detail { margin-top: 5px; height: 320px; background: #fff; border: 1px solid #828790; }
.ws-bytes { margin-top: 5px; height: 13px; background: #fff; border: 1px solid #828790; }
.ws-bytes i { display: block; width: 42px; height: 11px; background: #f0f0f0; }
.ws-status { flex: 1; display: flex; align-items: center; padding: 0 2px 0 10px; }
.ws-status span { padding-top: 2px; }
.lamp { width: 14px; height: 14px; border-radius: 50%; background: #dcd95c; border: 1px solid #77753a; margin-bottom: 2px; }
.note { width: 15px; height: 15px; margin: 0 13px 3px 9px; }
.fname { width: 541px; letter-spacing: -.1px; }
.dbl { width: 5px; height: 21px; border: 1px solid #a6a6a6; border-width: 0 1px; }
.pk { width: 243px; padding-left: 9px; letter-spacing: -.03px; }
.pf { width: 86px; padding-left: 9px; letter-spacing: -.08px; }
.sgl { width: 1px; height: 21px; background: #d0d0d0; }
.grip { width: 9px; height: 9px; margin: 12px 0 0 auto; }

/* taskbar */
.taskbar { height: 40px; display: flex; background: linear-gradient(90deg, #33201b 0, #2a1b1b 600px, #231817 860px, #474747 960px, #484848 1790px, #36322e 1880px, #332c26 1920px); color: #fff; }
.start { width: 48px; display: flex; align-items: center; justify-content: center; }
.start svg { width: 16px; height: 16px; }
.search { width: 344px; background: #f2f2f2; border: 1px solid #c4c4c4; display: flex; align-items: center; padding-left: 11px; color: #2a2a2a; font-size: 15px; letter-spacing: -.53px; }
.search svg { width: 17px; height: 17px; margin-right: 11px; }
.ti { display: flex; align-items: center; justify-content: center; width: 40px; }
.cortana { width: 47px; }
.view { width: 48px; }
.wide { width: 55px; }
.edge { width: 43px; }
.ti svg { width: 17px; height: 16px; }
.ti .l { width: 22px; height: 22px; }
.ti .xl { width: 24px; height: 23px; }
.ti.run { border-bottom: 2px solid #76b9ed; padding-top: 2px; }
.ti.first { margin: 0 9px 0 2px; }
.ti.pad { margin-right: 5px; }
.ti.on { width: 48px; background: #5b4c4a; margin-right: 5px; }
.tray { margin-left: auto; display: flex; align-items: center; padding-right: 17px; font-size: 12px; }
.tu { width: 12px; height: 8px; margin-right: 12px; }
.eng { letter-spacing: -.4px; width: 34px; }
.clock { display: flex; flex-direction: column; align-items: center; line-height: 18px; width: 57px; letter-spacing: -.41px; }
.clock .d { letter-spacing: -.57px; }
.ntf { width: 25px; height: 25px; margin: 4px 0 0 14px; }
.n7 { font: 12px "Open Sans", sans-serif; fill: #fff; text-anchor: middle; }
```
